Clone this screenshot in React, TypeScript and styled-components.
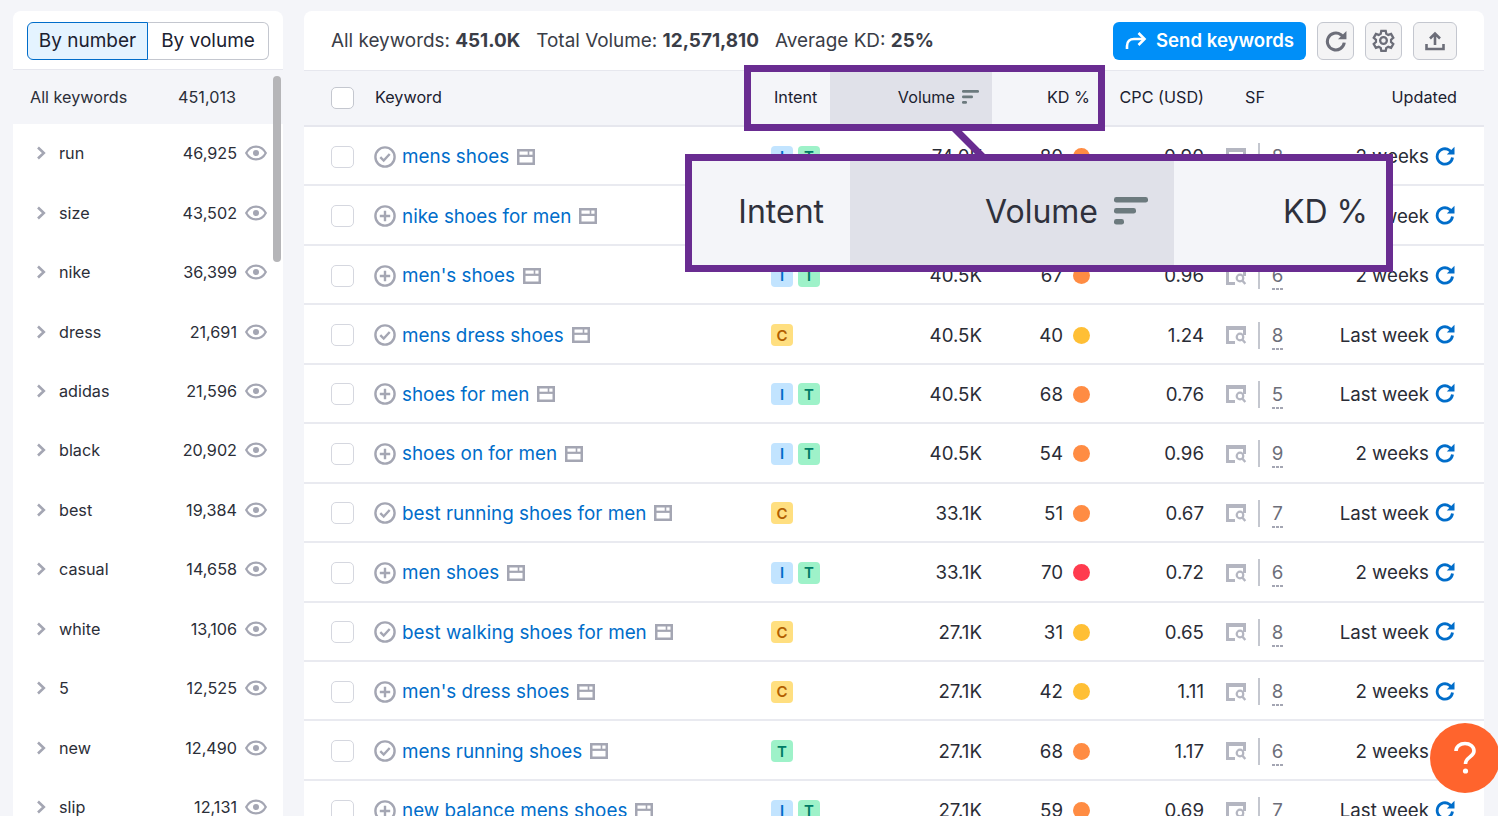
import styled, { createGlobalStyle } from "styled-components";

const GlobalStyle = createGlobalStyle`
  html, body {
    margin: 0;
    height: 816px;
    overflow: hidden;
    background: #f4f5f9;
    font-family: Inter, "Liberation Sans", sans-serif;
    color: #1f2029;
  }
  * {
    box-sizing: border-box;
  }
`;

const Page = styled.div`
  display: flex;
  align-items: flex-start;
  gap: 21px;
  height: 816px;
  padding: 11px 14px 0 13px;
  overflow: hidden;
`;

const Side = styled.aside`
  flex: 0 0 270px;
  background: #fff;
  border-radius: 8px 8px 0 0;
  position: relative;
  height: 805px;
  overflow: hidden;
`;

const SideTop = styled.div`
  display: flex;
  height: 59px;
  padding: 11px 14px 10px;
  border-bottom: 1px solid #e6e7ee;
`;

const Toggle = styled.div<{ $on?: boolean }>`
  height: 38px;
  width: 121px;
  display: flex;
  align-items: center;
  justify-content: center;
  padding-bottom: 2px;
  font-size: 19px;
  color: #1b2130;
  background: ${(p) => (p.$on ? "#e4f3ff" : "#fff")};
  border: 1px solid ${(p) => (p.$on ? "#006dca" : "#c4c7cf")};
  border-left-width: ${(p) => (p.$on ? "1px" : "0")};
  border-radius: ${(p) => (p.$on ? "6px 0 0 6px" : "0 6px 6px 0")};
`;

const AllRow = styled.div`
  height: 54px;
  display: flex;
  align-items: center;
  justify-content: space-between;
  padding: 0 47px 0 17px;
  background: #f4f5f9;
  font-size: 16.2px;
  color: #2b2e38;
`;

const SideRow = styled.div`
  height: 59.45px;
  display: flex;
  align-items: center;
  font-size: 16.2px;
  color: #2b2e38;
  padding: 0 16px 1px 23px;
`;

const SideLabel = styled.span`
  flex: 1;
  margin-left: 13px;
`;

const SideCount = styled.span`
  margin-right: 8px;
`;

const Thumb = styled.div`
  position: absolute;
  top: 65px;
  right: 2px;
  width: 8px;
  height: 186px;
  border-radius: 4px;
  background: #b5b5b8;
`;

const Main = styled.main`
  flex: 0 0 1180px;
  height: 805px;
  background: #fff;
  border-radius: 8px 8px 0 0;
  overflow: hidden;
`;

const Toolbar = styled.div`
  height: 59px;
  display: flex;
  align-items: center;
  padding: 0 27px;
  font-size: 18.9px;
  color: #3a3d47;
`;

const Stat = styled.span`
  margin-right: 16px;
  white-space: nowrap;
  b {
    font-weight: 700;
  }
`;

const Tools = styled.div`
  margin-left: auto;
  display: flex;
  align-items: center;
  gap: 11px;
`;

const SendButton = styled.button`
  height: 38px;
  width: 193px;
  display: flex;
  align-items: center;
  justify-content: center;
  gap: 9px;
  border: 0;
  border-radius: 6px;
  background: #008ff8;
  color: #fff;
  font: 600 18.6px Inter, sans-serif;
  padding: 0 0 2px;
`;

const IconButton = styled.button<{ $wide?: boolean }>`
  height: 38px;
  width: ${(p) => (p.$wide ? "44px" : "37px")};
  display: flex;
  align-items: center;
  justify-content: center;
  padding: 0;
  border: 1px solid #c4c7cf;
  border-radius: 6px;
  background: #f4f4f5;
  color: #6c6e79;
`;

const HeadRow = styled.div`
  height: 57px;
  display: grid;
  grid-template-columns: 70px 397px 59px 162px 100px 112px 86px 1fr;
  align-items: stretch;
  background: #f4f5f9;
  border-top: 1px solid #e6e7ee;
  border-bottom: 2px solid #e6e7ee;
  font-size: 16.2px;
  color: #1b2130;
`;

const HeadCell = styled.div<{ $active?: boolean; $inset?: number; $end?: boolean }>`
  display: flex;
  align-items: center;
  gap: 7px;
  padding-bottom: 2px;
  background: ${(p) => (p.$active ? "#e0e1e9" : "transparent")};
  padding-left: ${(p) => p.$inset ?? 0}px;
  padding-right: ${(p) => (p.$active ? "13px" : p.$end ? `${p.$inset ?? 0}px` : "0")};
  justify-content: ${(p) => (p.$active || p.$end ? "flex-end" : "flex-start")};
`;

const CheckCell = styled.div`
  display: flex;
  align-items: center;
  padding-left: 27px;
`;

const Check = styled.span<{ $head?: boolean }>`
  width: 23px;
  height: 22px;
  border-radius: 5px;
  background: #fff;
  border: 1px solid ${(p) => (p.$head ? "#c4c7cf" : "#d5d7df")};
`;

const Row = styled.div`
  height: 59.45px;
  display: grid;
  grid-template-columns: 70px 397px 91px 120px 108px 114px 86px 1fr;
  align-items: center;
  padding-top: 2px;
  border-bottom: 2px solid #e9eaf0;
  font-size: 18.7px;
  color: #2a2c36;
`;

const KeywordCell = styled.div`
  display: flex;
  align-items: center;
  gap: 6px;
`;

const KeywordLink = styled.a`
  color: #006dca;
  font-size: 18.85px;
  white-space: nowrap;
  margin-right: 2px;
`;

const Badges = styled.div`
  display: flex;
  gap: 5px;
`;

const badgeTone = {
  I: "background:#c2e4ff;color:#006dca;",
  T: "background:#9ef2c9;color:#007c65;",
  C: "background:#ffdf80;color:#b25e00;",
};

const Badge = styled.span<{ $kind: "I" | "T" | "C" }>`
  width: 22px;
  height: 22px;
  border-radius: 4px;
  display: flex;
  align-items: center;
  justify-content: center;
  font-size: 15px;
  font-weight: 600;
  ${(p) => badgeTone[p.$kind]}
`;

const Num = styled.div`
  text-align: right;
`;

const KdCell = styled.div`
  display: flex;
  align-items: center;
  justify-content: flex-end;
  gap: 10px;
`;

const Dot = styled.span<{ $color: string }>`
  width: 17px;
  height: 17px;
  border-radius: 50%;
  background: ${(p) => p.$color};
`;

const SfCell = styled.div`
  display: flex;
  align-items: center;
  padding-left: 22px;
`;

const Rule = styled.span`
  width: 2px;
  height: 27px;
  margin: 0 12px 0 11px;
  background: #c4c7cf;
`;

const SfCount = styled.span`
  color: #6c6e79;
  position: relative;
  width: 11px;
  display: flex;
  justify-content: center;

  &::after {
    content: "";
    position: absolute;
    left: 0;
    right: 0;
    bottom: -3px;
    height: 2px;
    background: repeating-linear-gradient(90deg, #a4a6b3 0 3px, transparent 3px 4px);
  }
`;

const UpdatedCell = styled.div`
  display: flex;
  align-items: center;
  justify-content: flex-end;
  gap: 6px;
  padding-right: 29px;
  white-space: nowrap;

  svg {
    margin-bottom: 2px;
  }
`;

const Callout = styled.div`
  position: absolute;
  border: 7px solid #692c91;
`;

const SmallCallout = styled(Callout)`
  left: 744px;
  top: 65px;
  width: 361px;
  height: 66px;
`;

const Connector = styled.svg`
  position: absolute;
  left: 950px;
  top: 128px;
`;

const BigCallout = styled(Callout)`
  left: 685px;
  top: 154px;
  width: 708px;
  height: 118px;
  background: #f4f5f9;
  display: grid;
  grid-template-columns: 158px 324px 1fr;
  font-size: 32px;
  color: #2f313c;
`;

const BigCell = styled.div<{ $active?: boolean; $inset: number }>`
  display: flex;
  align-items: center;
  justify-content: flex-end;
  gap: 16px;
  padding: 0 ${(p) => p.$inset}px 4px 0;
  background: ${(p) => (p.$active ? "#e0e1e9" : "transparent")};
`;

const HelpButton = styled.div`
  position: fixed;
  left: 1430px;
  top: 723px;
  width: 70px;
  height: 70px;
  border-radius: 50%;
  background: #ff642d;
  color: #fff;
  display: flex;
  align-items: center;
  justify-content: center;
`;

const Chevron = () => (
  <svg width="10" height="14" viewBox="0 0 10 14" fill="none">
    <path d="M2 1.500l5.800 5.500L2 12.500" stroke="#a4a6b3" strokeWidth="2.600" />
  </svg>
);

const Eye = () => (
  <svg width="22" height="16" viewBox="0 0 22 16" fill="none">
    <path
      d="M1.200 8C3.400 3.800 7 1.600 11 1.600S18.600 3.800 20.800 8C18.600 12.200 15 14.400 11 14.400S3.400 12.200 1.200 8Z"
      stroke="#a4a6b3"
      strokeWidth="2.200"
    />
    <circle cx="11" cy="8" r="3" fill="#a4a6b3" />
  </svg>
);

const CheckedIcon = () => (
  <svg width="22" height="22" viewBox="0 0 22 22" fill="none">
    <circle cx="11" cy="11" r="9.600" stroke="#a4a6b3" strokeWidth="2.400" />
    <path d="M6.300 11.200l3.400 3.400 6-6.600" stroke="#a4a6b3" strokeWidth="2.400" />
  </svg>
);

const PlusIcon = () => (
  <svg width="22" height="22" viewBox="0 0 22 22" fill="none">
    <circle cx="11" cy="11" r="9.600" stroke="#a4a6b3" strokeWidth="2.400" />
    <path d="M11 5.800v10.400M5.800 11h10.400" stroke="#a4a6b3" strokeWidth="2.400" />
  </svg>
);

const PageIcon = () => (
  <svg width="18" height="16" viewBox="0 0 18 16" fill="none">
    <rect x="1.250" y="1.250" width="15.500" height="13.500" stroke="#a4a6b3" strokeWidth="2.500" />
    <path d="M1 6.800h16" stroke="#a4a6b3" strokeWidth="2.200" />
    <path d="M11.500 2v4" stroke="#a4a6b3" strokeWidth="1.600" />
  </svg>
);

const SerpIcon = () => (
  <svg width="21" height="18" viewBox="0 0 21 18" fill="none">
    <path d="M0 0h20v9h-3V4H3v11h6v3H0V0Z" fill="#b4b6c1" />
    <circle cx="14" cy="11" r="3.300" stroke="#b4b6c1" strokeWidth="2.200" />
    <path d="M16.300 13.500l3 3.500" stroke="#b4b6c1" strokeWidth="2.400" />
  </svg>
);

const Refresh = ({ color, size }: { color: string; size: number }) => (
  <svg width={size} height={size} viewBox="0 0 20 20" fill="none">
    <path
      d="M17.500 11.500A7.700 7.700 0 1 1 14.500 4.300L16.500 6.200"
      stroke={color}
      strokeWidth="2.800"
    />
    <path d="M19.500 0.800V8.500H11.800Z" fill={color} />
  </svg>
);

const SendIcon = () => (
  <svg width="22" height="20" viewBox="0 0 22 20" fill="none">
    <path d="M2 19v-3c0-4.500 3-7 7-7h10" stroke="#fff" strokeWidth="2.600" />
    <path d="M13.500 3l6 6-6 6" stroke="#fff" strokeWidth="2.600" />
  </svg>
);

const GearIcon = () => (
  <svg width="23" height="23" viewBox="0 0 24 24" fill="none" stroke="currentColor" strokeWidth="2.400">
    <path d="M9.700 2h4.600l.6 3 2.100 1.200 2.900-1 2.300 4-2.300 2v2.400l2.300 2-2.300 4-2.900-1-2.100 1.200-.6 3H9.700l-.6-3-2.100-1.200-2.900 1-2.300-4 2.300-2v-2.400l-2.300-2 2.300-4 2.900 1L9.100 5Z" />
    <circle cx="12" cy="12" r="3.500" />
  </svg>
);

const UploadIcon = () => (
  <svg width="20" height="20" viewBox="0 0 20 20" fill="none" stroke="currentColor" strokeWidth="2.600">
    <path d="M10 14V3M5 7.500 10 2.500l5 5M1.500 13v5h17v-5" />
  </svg>
);

const SortIcon = ({ scale = 1 }: { scale?: number }) => (
  <svg width={17 * scale} height={14 * scale} viewBox="0 0 17 14">
    <rect width="17" height="2.800" rx="1.200" fill="#6c7a7e" />
    <rect y="5.500" width="11" height="2.800" rx="1.200" fill="#6c7a7e" />
    <rect y="11" width="5" height="2.800" rx="1.200" fill="#6c7a7e" />
  </svg>
);

const sideItems = [
  ["run", "46,925"],
  ["size", "43,502"],
  ["nike", "36,399"],
  ["dress", "21,691"],
  ["adidas", "21,596"],
  ["black", "20,902"],
  ["best", "19,384"],
  ["casual", "14,658"],
  ["white", "13,106"],
  ["5", "12,525"],
  ["new", "12,490"],
  ["slip", "12,131"],
];

const ORANGE = "#ff8c43";
const YELLOW = "#ffbf35";
const RED = "#ff3b4e";

type KeywordRow = {
  name: string;
  added: boolean;
  intents: ("I" | "T" | "C")[];
  volume: string;
  kd: number;
  dot: string;
  cpc: string;
  sf: number;
  updated: string;
};

const rows: KeywordRow[] = [
  { name: "mens shoes", added: true, intents: ["I", "T"], volume: "74.0K", kd: 80, dot: ORANGE, cpc: "0.90", sf: 8, updated: "2 weeks" },
  { name: "nike shoes for men", added: false, intents: ["I", "T"], volume: "49.5K", kd: 72, dot: ORANGE, cpc: "0.88", sf: 7, updated: "Last week" },
  { name: "men's shoes", added: false, intents: ["I", "T"], volume: "40.5K", kd: 67, dot: ORANGE, cpc: "0.96", sf: 6, updated: "2 weeks" },
  { name: "mens dress shoes", added: true, intents: ["C"], volume: "40.5K", kd: 40, dot: YELLOW, cpc: "1.24", sf: 8, updated: "Last week" },
  { name: "shoes for men", added: false, intents: ["I", "T"], volume: "40.5K", kd: 68, dot: ORANGE, cpc: "0.76", sf: 5, updated: "Last week" },
  { name: "shoes on for men", added: false, intents: ["I", "T"], volume: "40.5K", kd: 54, dot: ORANGE, cpc: "0.96", sf: 9, updated: "2 weeks" },
  { name: "best running shoes for men", added: true, intents: ["C"], volume: "33.1K", kd: 51, dot: ORANGE, cpc: "0.67", sf: 7, updated: "Last week" },
  { name: "men shoes", added: false, intents: ["I", "T"], volume: "33.1K", kd: 70, dot: RED, cpc: "0.72", sf: 6, updated: "2 weeks" },
  { name: "best walking shoes for men", added: true, intents: ["C"], volume: "27.1K", kd: 31, dot: YELLOW, cpc: "0.65", sf: 8, updated: "Last week" },
  { name: "men's dress shoes", added: false, intents: ["C"], volume: "27.1K", kd: 42, dot: YELLOW, cpc: "1.11", sf: 8, updated: "2 weeks" },
  { name: "mens running shoes", added: true, intents: ["T"], volume: "27.1K", kd: 68, dot: ORANGE, cpc: "1.17", sf: 6, updated: "2 weeks" },
  { name: "new balance mens shoes", added: false, intents: ["I", "T"], volume: "27.1K", kd: 59, dot: ORANGE, cpc: "0.69", sf: 7, updated: "Last week" },
];

export default function App() {
  return (
    <>
      <GlobalStyle />
      <Page>
        <Side>
          <SideTop>
            <Toggle $on>By number</Toggle>
            <Toggle>By volume</Toggle>
          </SideTop>
          <AllRow>
            <span>All keywords</span>
            <span>451,013</span>
          </AllRow>
          {sideItems.map(([label, count]) => (
            <SideRow key={label}>
              <Chevron />
              <SideLabel>{label}</SideLabel>
              <SideCount>{count}</SideCount>
              <Eye />
            </SideRow>
          ))}
          <Thumb />
        </Side>
        <Main>
          <Toolbar>
            <Stat>
              All keywords: <b>451.0K</b>
            </Stat>
            <Stat>
              Total Volume: <b>12,571,810</b>
            </Stat>
            <Stat>
              Average KD: <b>25%</b>
            </Stat>
            <Tools>
              <SendButton>
                <SendIcon />
                Send keywords
              </SendButton>
              <IconButton>
                <Refresh color="#6c6e79" size={22} />
              </IconButton>
              <IconButton>
                <GearIcon />
              </IconButton>
              <IconButton $wide>
                <UploadIcon />
              </IconButton>
            </Tools>
          </Toolbar>
          <HeadRow>
            <CheckCell>
              <Check $head />
            </CheckCell>
            <HeadCell $inset={1}>Keyword</HeadCell>
            <HeadCell $inset={3}>Intent</HeadCell>
            <HeadCell $active>
              Volume
              <SortIcon />
            </HeadCell>
            <HeadCell $end $inset={2}>KD %</HeadCell>
            <HeadCell $end>CPC (USD)</HeadCell>
            <HeadCell $inset={41}>SF</HeadCell>
            <HeadCell $end $inset={27}>Updated</HeadCell>
          </HeadRow>
          {rows.map((row) => (
            <Row key={row.name}>
              <CheckCell>
                <Check />
              </CheckCell>
              <KeywordCell>
                {row.added ? <CheckedIcon /> : <PlusIcon />}
                <KeywordLink>{row.name}</KeywordLink>
                <PageIcon />
              </KeywordCell>
              <Badges>
                {row.intents.map((kind) => (
                  <Badge key={kind} $kind={kind}>
                    {kind}
                  </Badge>
                ))}
              </Badges>
              <Num>{row.volume}</Num>
              <KdCell>
                {row.kd}
                <Dot $color={row.dot} />
              </KdCell>
              <Num>{row.cpc}</Num>
              <SfCell>
                <SerpIcon />
                <Rule />
                <SfCount>{row.sf}</SfCount>
              </SfCell>
              <UpdatedCell>
                {row.updated}
                <Refresh color="#006dca" size={20} />
              </UpdatedCell>
            </Row>
          ))}
        </Main>
      </Page>
      <SmallCallout />
      <Connector width="45" height="35" viewBox="0 0 45 35">
        <path d="M4 0l30 30" stroke="#692c91" strokeWidth="7" fill="none" />
      </Connector>
      <BigCallout>
        <BigCell $inset={26}>Intent</BigCell>
        <BigCell $active $inset={26}>
          Volume
          <SortIcon scale={2} />
        </BigCell>
        <BigCell $inset={18}>KD %</BigCell>
      </BigCallout>
      <HelpButton>
        <svg width="30" height="36" viewBox="0 0 30 36" fill="none">
          <path d="M6 11c0-4.500 4-7.500 9-7.500s9 3 9 7.500c0 6-8.500 6-8.500 13" stroke="#fff" strokeWidth="3.600" />
          <circle cx="15.500" cy="31" r="2.600" fill="#fff" />
        </svg>
      </HelpButton>
    </>
  );
}
